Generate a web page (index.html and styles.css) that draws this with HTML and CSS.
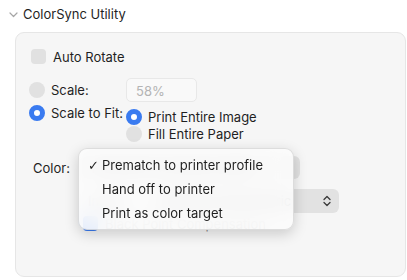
FILE: index.html
```html
<!DOCTYPE html>
<html lang="en">
<head>
  <meta charset="UTF-8" />
  <title>ColorSync Utility</title>
  <link rel="stylesheet" href="styles.css">
</head>
<body>
  <div class="section-title">
    <svg class="disclosure" width="9" height="6" viewBox="0 0 9 6"><path d="M1 1l3.5 3.5L8 1" fill="none" stroke="#a6a6a6" stroke-width="1.2" stroke-linecap="round" stroke-linejoin="round"/></svg>
    <span>ColorSync Utility</span>
  </div>

  <div class="panel">
    <div class="check-row">
      <span class="checkbox"></span>
      <span>Auto Rotate</span>
    </div>

    <div class="scale-grid">
      <div class="radio-row">
        <span class="radio"></span>
        <span>Scale:</span>
      </div>
      <div class="field">58%</div>

      <div class="radio-row fit">
        <span class="radio on"></span>
        <span>Scale to Fit:</span>
      </div>
      <div class="sub-options">
        <div class="radio-row">
          <span class="radio on"></span>
          <span>Print Entire Image</span>
        </div>
        <div class="radio-row">
          <span class="radio"></span>
          <span>Fill Entire Paper</span>
        </div>
      </div>
    </div>

    <div class="color-area">
      <div class="color-row">
        <span class="label">Color:</span>
        <div class="popup first">Prematch to printer profile</div>
      </div>
      <div class="color-row second">
        <span class="label-inner">Intent:</span>
        <div class="popup wide">
          <span>Relative Colorimetric</span>
          <svg width="8" height="12" viewBox="0 0 8 12"><path d="M1 4.5L4 1.5L7 4.5M1 7.5L4 10.5L7 7.5" fill="none" stroke="#3a3a3a" stroke-width="1.3" stroke-linecap="round" stroke-linejoin="round"/></svg>
        </div>
      </div>
      <div class="check-row bpc">
        <span class="checkbox on"></span>
        <span>Black Point Compensation</span>
      </div>

      <div class="menu">
        <div class="menu-item"><span class="tick">✓</span>Prematch to printer profile</div>
        <div class="menu-item"><span class="tick"></span>Hand off to printer</div>
        <div class="menu-item"><span class="tick"></span>Print as color target</div>
      </div>
    </div>
  </div>
</body>
</html>
```

FILE: styles.css
```css
body {
  margin: 0;
  background: #ffffff;
  font-family: Inter, "Liberation Sans", sans-serif;
  font-size: 13px;
  color: #1f1f1f;
  overflow: hidden;
}

.section-title {
  display: flex;
  align-items: center;
  height: 32px;
  padding-left: 9px;
  gap: 5px;
  padding-bottom: 4px;
  box-sizing: border-box;
}

.disclosure {
  margin-top: 1px;
}

.panel {
  margin-left: 15px;
  width: 391px;
  height: 245px;
  box-sizing: border-box;
  background: #f6f6f6;
  border: 1px solid #e6e6e6;
  border-radius: 9px;
  padding: 15px 0 0 13px;
}

.check-row {
  display: flex;
  align-items: center;
  gap: 7px;
  height: 17px;
  padding-left: 2px;
}

.checkbox {
  width: 15px;
  height: 15px;
  border-radius: 4px;
  background: #e1e1e1;
  flex: none;
}

.checkbox.on {
  background: #3a7bf0;
}

.scale-grid {
  display: grid;
  grid-template-columns: 97px auto;
  margin-top: 13px;
  row-gap: 2px;
  align-items: center;
}

.radio-row {
  display: flex;
  align-items: center;
  gap: 6px;
  height: 17px;
}

.radio {
  width: 16px;
  height: 16px;
  border-radius: 50%;
  background: #e1e1e1;
  flex: none;
  box-sizing: border-box;
}

.radio.on {
  border: 5px solid #3a7bf0;
  background-color: #ffffff;
}

.field {
  width: 71px;
  height: 24px;
  box-sizing: border-box;
  border: 1px solid #e8e8e8;
  border-radius: 5px;
  background: #f9f9f9;
  color: #b4b4b4;
  padding: 4px 0 0 9px;
}

.fit {
  align-self: start;
}

.sub-options {
  align-self: start;
  margin-top: 4px;
}

.color-area {
  position: relative;
  margin-top: 14px;
}

.color-row {
  display: flex;
  align-items: center;
  height: 23px;
}

.label {
  width: 49px;
  padding-left: 4px;
}

.popup {
  height: 23px;
  background: #e2e2e2;
  border-radius: 6px;
  display: flex;
  align-items: center;
  padding: 0 10px;
  box-sizing: border-box;
  color: #444;
}

.popup.first {
  width: 218px;
}

.color-row.second {
  margin-top: 10px;
  height: 24px;
}

.label-inner {
  width: 66px;
  padding-left: 59px;
}

.popup.wide {
  width: 185px;
  height: 24px;
  justify-content: space-between;
  padding-right: 8px;
}

.check-row.bpc {
  margin-top: 2px;
  padding-left: 54px;
  color: #8a8a8a;
}

.menu {
  position: absolute;
  left: 49px;
  top: -8px;
  width: 216px;
  height: 82px;
  box-sizing: border-box;
  padding: 4px 0;
  background: rgba(252, 252, 252, 0.88);
  backdrop-filter: blur(10px);
  border: 1px solid rgba(0, 0, 0, 0.12);
  border-radius: 9px;
  box-shadow: 0 4px 14px rgba(0, 0, 0, 0.18);
}

.menu-item {
  display: flex;
  align-items: center;
  height: 24px;
  padding-left: 9px;
}

.tick {
  width: 14px;
  font-family: "DejaVu Sans", sans-serif;
  font-size: 13px;
  font-weight: bold;
}
```
